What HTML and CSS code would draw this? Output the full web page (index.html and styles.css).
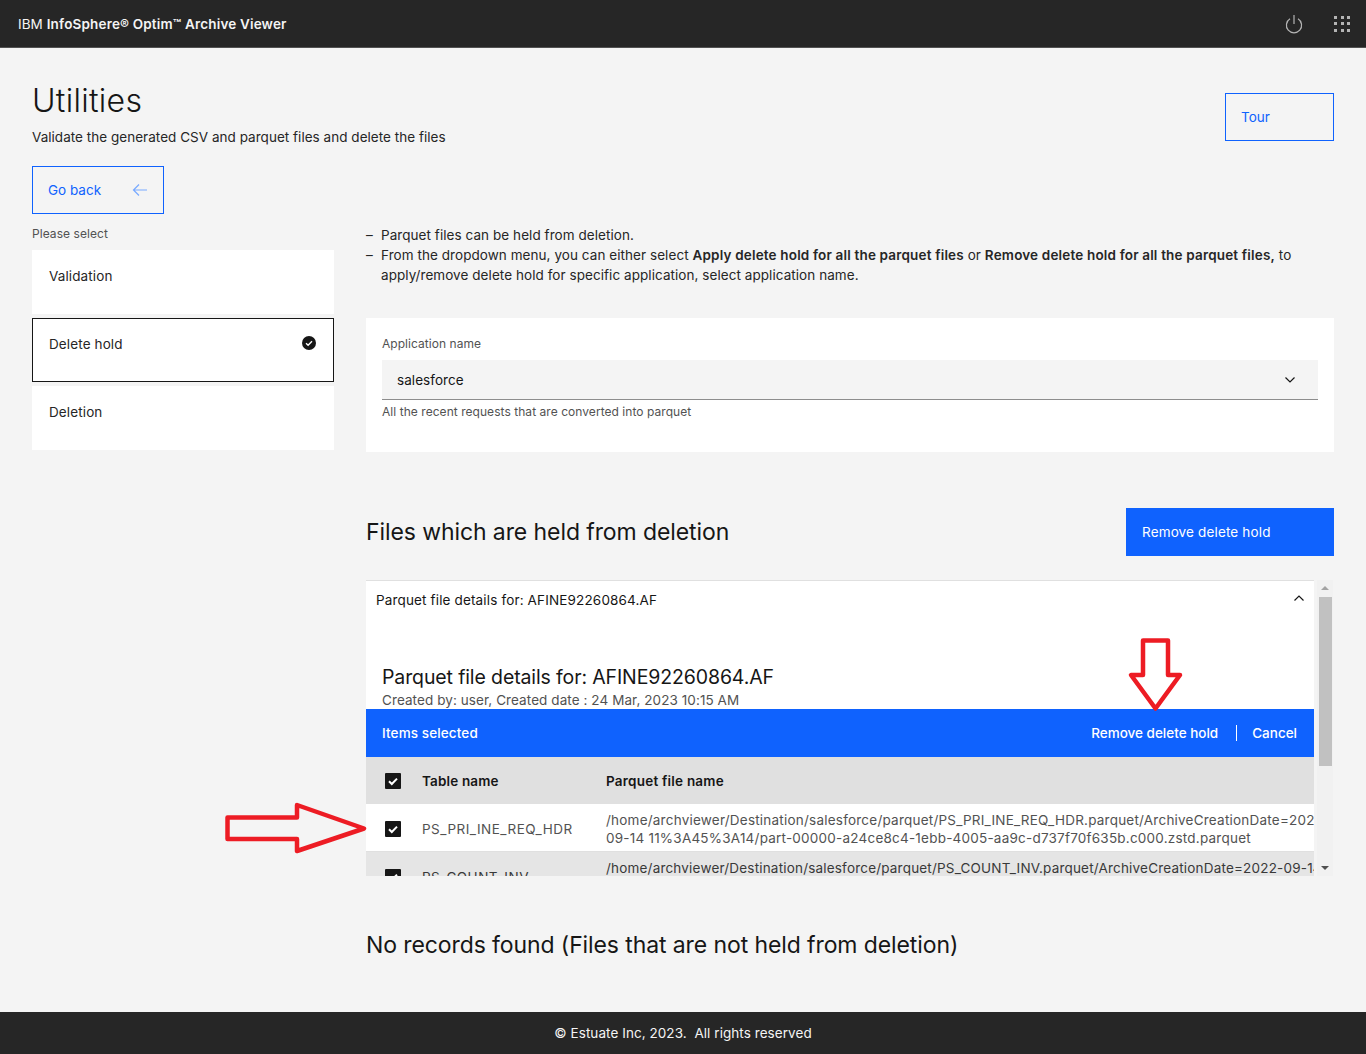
FILE: index.html
```html
<!DOCTYPE html>
<html lang="en">
<head>
    <meta charset="UTF-8">
    <meta name="viewport" content="width=device-width, initial-scale=1.0">
    <title>Utilities</title>
    <link rel="stylesheet" href="styles.css">
</head>
<body>
    <header class="topbar">
        <div class="brand">IBM <b>InfoSphere® Optim™ Archive Viewer</b></div>
        <div class="topbar-icons">
            <svg class="power" width="20" height="20" viewBox="0 0 20 20" fill="none" stroke="#b4b4b4" stroke-width="1.2">
                <path d="M10 1v9"/>
                <path d="M6 4.800a7.600 7.600 0 1 0 8 0"/>
            </svg>
            <div class="dots">
                <i></i><i></i><i></i><i></i><i></i><i></i><i></i><i></i><i></i>
            </div>
        </div>
    </header>

    <main class="page">
        <div class="page-head">
            <div>
                <h1>Utilities</h1>
                <p class="subtitle">Validate the generated CSV and parquet files and delete the files</p>
            </div>
            <a class="btn-outline tour">Tour</a>
        </div>
        <a class="btn-outline back">Go back
            <svg width="16" height="16" viewBox="0 0 16 16" fill="none" stroke="#78a9ff" stroke-width="1.2"><path d="M15 8H1.500M7 2.500 1.500 8 7 13.500"/></svg>
        </a>

        <div class="columns">
            <aside class="side">
                <div class="side-label">Please select</div>
                <div class="tile">Validation</div>
                <div class="tile selected">Delete hold
                    <svg class="tile-check" width="14" height="14" viewBox="0 0 14 14"><circle cx="7" cy="7" r="7" fill="#161616"/><path d="M4 7.200 6.100 9.200 10 5.200" fill="none" stroke="#fff" stroke-width="1.400"/></svg>
                </div>
                <div class="tile">Deletion</div>
            </aside>

            <section class="content">
                <ul class="notes">
                    <li>Parquet files can be held from deletion.</li>
                    <li>From the dropdown menu, you can either select <b>Apply delete hold for all the parquet files</b> or <b>Remove delete hold for all the parquet files,</b> to apply/remove delete hold for specific application, select application name.</li>
                </ul>

                <div class="card">
                    <div class="field-label">Application name</div>
                    <div class="select">salesforce
                        <svg width="16" height="16" viewBox="0 0 16 16" fill="none" stroke="#161616" stroke-width="1.2"><path d="M3.500 5.500 8 10l4.500-4.500"/></svg>
                    </div>
                    <div class="helper">All the recent requests that are converted into parquet</div>
                </div>

                <div class="files-head">
                    <h2>Files which are held from deletion</h2>
                    <a class="btn-primary">Remove delete hold</a>
                </div>

                <div class="scroll-box">
                    <div class="accordion">
                        <div class="accordion-head">Parquet file details for: AFINE92260864.AF
                            <svg width="16" height="16" viewBox="0 0 16 16" fill="none" stroke="#161616" stroke-width="1.2"><path d="M3.500 10.500 8 6l4.500 4.500"/></svg>
                        </div>
                        <div class="details-title">Parquet file details for: AFINE92260864.AF</div>
                        <div class="details-meta">Created by: user, Created date : 24 Mar, 2023 10:15 AM</div>
                        <div class="batch-bar">
                            <span class="batch-count">Items selected</span>
                            <span class="batch-action">Remove delete hold</span>
                            <span class="batch-sep"></span>
                            <span class="batch-action">Cancel</span>
                        </div>
                        <div class="table-row table-head">
                            <span class="box"><svg width="16" height="16" viewBox="0 0 16 16"><rect width="16" height="16" rx="1" fill="#161616"/><path d="M4 8.200 6.800 11 12 5.600" fill="none" stroke="#fff" stroke-width="2"/></svg></span>
                            <span class="col-name">Table name</span>
                            <span class="col-file">Parquet file name</span>
                        </div>
                        <div class="table-row row-white">
                            <span class="box"><svg width="16" height="16" viewBox="0 0 16 16"><rect width="16" height="16" rx="1" fill="#161616"/><path d="M4 8.200 6.800 11 12 5.600" fill="none" stroke="#fff" stroke-width="2"/></svg></span>
                            <span class="col-name">PS_PRI_INE_REQ_HDR</span>
                            <span class="col-file">/home/archviewer/Destination/salesforce/parquet/PS_PRI_INE_REQ_HDR.parquet/ArchiveCreationDate=2022-<br>09-14 11%3A45%3A14/part-00000-a24ce8c4-1ebb-4005-aa9c-d737f70f635b.c000.zstd.parquet</span>
                        </div>
                        <div class="table-row row-grey">
                            <span class="box"><svg width="16" height="16" viewBox="0 0 16 16"><rect width="16" height="16" rx="1" fill="#161616"/><path d="M4 8.200 6.800 11 12 5.600" fill="none" stroke="#fff" stroke-width="2"/></svg></span>
                            <span class="col-name">PS_COUNT_INV</span>
                            <span class="col-file">/home/archviewer/Destination/salesforce/parquet/PS_COUNT_INV.parquet/ArchiveCreationDate=2022-09-14<br>11%3A45%3A14/part-00000.zstd.parquet</span>
                        </div>
                    </div>
                    <div class="scrollbar">
                        <span class="arrow-up"></span>
                        <span class="thumb"></span>
                        <span class="arrow-down"></span>
                    </div>
                </div>

                <h2 class="no-records">No records found (Files that are not held from deletion)</h2>
            </section>
        </div>
    </main>

    <footer class="footer">© Estuate Inc, 2023.&nbsp; All rights reserved</footer>

    <!-- red annotation arrows drawn on top of the screenshot -->
    <svg class="mark mark-right" width="146" height="56" viewBox="224 801 146 56" fill="none" stroke="#ed1c24" stroke-width="4.500" stroke-linejoin="round">
        <path d="M227.500 817.500H297V805L364 828.500 297 851V839H227.500Z"/>
    </svg>
    <svg class="mark mark-down" width="58" height="76" viewBox="1127 637 58 76" fill="none" stroke="#ed1c24" stroke-width="4.500" stroke-linejoin="round">
        <path d="M1143 640.500H1168V675H1180L1155.500 708.500 1131 675H1143Z"/>
    </svg>
</body>
</html>
```

FILE: styles.css
```css
* {
    box-sizing: border-box;
}
body {
    position: relative;
    margin: 0;
    min-height: 1054px;
    display: flex;
    flex-direction: column;
    background: #f4f4f4;
    color: #161616;
    font-family: "Inter", "Noto Sans", sans-serif;
    font-size: 13.5px;
    line-height: 20px;
    letter-spacing: 0.06px;
}
b {
    font-weight: 600;
    letter-spacing: 0.17px;
}

/* top bar */
.topbar {
    height: 48px;
    padding: 0 16px 0 18px;
    display: flex;
    align-items: center;
    justify-content: space-between;
    background: #262626;
    border-bottom: 1px solid #525252;
    color: #f4f4f4;
}
.brand {
    font-size: 13.5px;
}
.topbar-icons {
    display: flex;
    align-items: center;
    gap: 30px;
}
.dots {
    display: grid;
    grid-template-columns: repeat(3, 3px);
    gap: 3.500px;
}
.dots i {
    height: 3px;
    background: #b4b4b4;
}

/* page */
.page {
    flex: 1;
    padding: 0 32px;
}
.page-head {
    display: flex;
    justify-content: space-between;
    align-items: flex-start;
    padding-top: 32px;
    height: 118px;
}
h1 {
    margin: 0;
    font-size: 32px;
    font-weight: 300;
    line-height: 42px;
    letter-spacing: 0.3px;
}
.subtitle {
    margin: 5px 0 0;
    color: #262626;
    letter-spacing: 0.03px;
}
.btn-outline {
    display: flex;
    align-items: center;
    height: 48px;
    padding: 0 15px;
    border: 1px solid #0f62fe;
    color: #0f62fe;
    letter-spacing: 0;
}
.tour {
    width: 109px;
    margin-top: 13px;
}
.back {
    width: 132px;
    justify-content: space-between;
}

.columns {
    display: flex;
    gap: 32px;
    align-items: flex-start;
}
.side {
    width: 302px;
    flex: none;
    display: flex;
    flex-direction: column;
    gap: 4px;
}
.side-label {
    margin-top: 12px;
    font-size: 12px;
    line-height: 16px;
    color: #525252;
    margin-bottom: 4px;
}
.tile {
    position: relative;
    height: 64px;
    padding: 16px 17px;
    background: #fff;
    color: #262626;
    letter-spacing: 0.12px;
}
.selected {
    border: 1px solid #161616;
    padding: 15px 16px;
}
.tile-check {
    position: absolute;
    top: 17px;
    right: 17px;
}

/* right column */
.content {
    flex: 1;
    min-width: 0;
    padding-top: 11px;
}
.notes {
    margin: 0;
    padding: 0 0 0 15px;
    list-style: none;
    color: #262626;
}
.notes li {
    position: relative;
}
.notes li::before {
    content: "–";
    position: absolute;
    left: -15px;
}
.card {
    margin-top: 33px;
    height: 134px;
    padding: 17px 16px 0;
    background: #fff;
}
.field-label, .helper {
    font-size: 12px;
    line-height: 18px;
    color: #525252;
    letter-spacing: 0.05px;
}
.select {
    height: 40px;
    margin-top: 7px;
    padding: 0 20px 0 15px;
    display: flex;
    align-items: center;
    justify-content: space-between;
    background: #f4f4f4;
    border-bottom: 1px solid #8d8d8d;
    color: #161616;
}
.helper {
    margin-top: 3px;
}
.files-head {
    margin-top: 56px;
    display: flex;
    justify-content: space-between;
    align-items: center;
}
h2 {
    margin: 0;
    font-size: 23px;
    font-weight: 400;
    line-height: 32px;
    color: #161616;
    letter-spacing: -0.09px;
}
.btn-primary {
    display: flex;
    align-items: center;
    width: 208px;
    height: 48px;
    padding: 0 16px;
    background: #0f62fe;
    color: #fff;
    letter-spacing: 0.15px;
}

/* accordion with the table, cut off by its fake scrollbar box */
.scroll-box {
    margin-top: 24px;
    height: 296px;
    display: flex;
    overflow: hidden;
}
.accordion {
    width: 948px;
    flex: none;
    background: #fff;
    border-top: 1px solid #e0e0e0;
    overflow: hidden;
}
.accordion-head {
    height: 48px;
    padding: 9px 7px 0 10px;
    display: flex;
    align-items: flex-start;
    justify-content: space-between;
    color: #161616;
    letter-spacing: 0.15px;
}
.details-title {
    margin: 35px 0 0 16px;
    font-size: 19.5px;
    line-height: 26px;
    color: #161616;
    letter-spacing: -0.12px;
}
.details-meta {
    margin-left: 16px;
    height: 19px;
    color: #525252;
    letter-spacing: 0.08px;
}
.batch-bar {
    height: 48px;
    padding: 0 17px 0 16px;
    display: flex;
    align-items: center;
    background: #0f62fe;
    color: #fff;
    letter-spacing: 0.12px;
}
.batch-count {
    flex: 1;
    font-weight: 500;
}
.batch-action {
    font-weight: 500;
    letter-spacing: 0;
}
.batch-sep {
    width: 1px;
    height: 16px;
    margin: 0 15px 0 18px;
    background: #fff;
}
.table-row {
    display: flex;
    align-items: center;
    height: 48px;
    padding-top: 2px;
    white-space: nowrap;
    color: #525252;
}
.box {
    width: 56px;
    flex: none;
    padding-left: 19px;
    display: flex;
}
.col-name {
    width: 184px;
    flex: none;
    letter-spacing: 0.5px;
}
.col-file {
    line-height: 18px;
    letter-spacing: 0.22px;
}
.table-head {
    height: 47px;
    padding-top: 0;
    background: #e0e0e0;
    color: #161616;
    font-weight: 600;
}
.table-head .col-name {
    letter-spacing: 0.15px;
}
.row-white {
    background: #fff;
    border-bottom: 1px solid #e0e0e0;
}
.row-grey {
    background: #e5e5e5;
    color: #393939;
}
.row-grey .col-file {
    letter-spacing: 0.19px;
}

.scrollbar {
    position: relative;
    width: 16px;
    margin-left: 3px;
    background: #f1f1f1;
}
.thumb {
    position: absolute;
    top: 17px;
    left: 2px;
    width: 13px;
    height: 169px;
    background: #c1c1c1;
}
.arrow-up, .arrow-down {
    position: absolute;
    left: 4px;
    width: 0;
    height: 0;
    border-left: 4px solid transparent;
    border-right: 4px solid transparent;
}
.arrow-up {
    top: 6px;
    border-bottom: 4px solid #a3a3a3;
}
.arrow-down {
    bottom: 6px;
    border-top: 4px solid #505050;
}
.no-records {
    margin-top: 53px;
    letter-spacing: -0.1px;
}

.footer {
    height: 42px;
    display: flex;
    align-items: center;
    justify-content: center;
    background: #262626;
    color: #f4f4f4;
}

.mark {
    position: absolute;
}
.mark-right {
    left: 224px;
    top: 801px;
}
.mark-down {
    left: 1127px;
    top: 637px;
}
```
